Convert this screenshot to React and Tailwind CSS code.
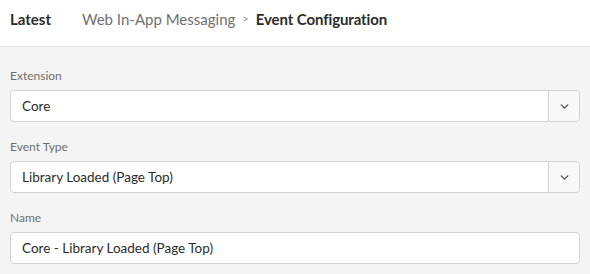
import { ChevronDown } from "lucide-react";

function SelectField({ label, value }) {
  return (
    <div>
      <div className="text-[12px] leading-4 text-[#6e6e6e] mb-[6px]">{label}</div>
      <div className="flex h-[32px] bg-white border border-[#d3d3d3] rounded-[4px]">
        <div className="flex-1 flex items-center pl-[11px] text-[13.5px] text-[#2c2c2c]">{value}</div>
        <div className="w-[31px] flex items-center justify-center border-l border-[#d3d3d3] bg-[#f8f8f8] rounded-r-[4px]">
          <ChevronDown size={13} strokeWidth={2.5} className="text-[#505050]" />
        </div>
      </div>
    </div>
  );
}

export default function App() {
  return (
    <div className="w-[590px] h-[274px] bg-[#f4f4f4] font-['Lato',sans-serif] overflow-hidden">
      {/* Header */}
      <div className="h-[47px] bg-white border-b border-[#e4e4e4] flex items-center px-[10px] pb-[8px]">
        <span className="text-[15px] font-bold text-[#2c2c2c]">Latest</span>
        <span className="ml-[31px] text-[15px] text-[#707070]">Web In-App Messaging</span>
        <span className="mx-[7px] text-[11px] text-[#909090]">&gt;</span>
        <span className="text-[15px] font-bold text-[#2c2c2c] tracking-[-0.1px]">Event Configuration</span>
      </div>

      <div className="px-[10px] pt-[21px] flex flex-col gap-[17px]">
        <SelectField label="Extension" value="Core" />
        <SelectField label="Event Type" value="Library Loaded (Page Top)" />
        <div>
          <div className="text-[12px] leading-4 text-[#6e6e6e] mb-[6px]">Name</div>
          <div className="h-[32px] bg-white border border-[#d3d3d3] rounded-[4px] flex items-center pl-[11px] text-[13.5px] text-[#2c2c2c]">
            Core - Library Loaded (Page Top)
          </div>
        </div>
      </div>
    </div>
  );
}
